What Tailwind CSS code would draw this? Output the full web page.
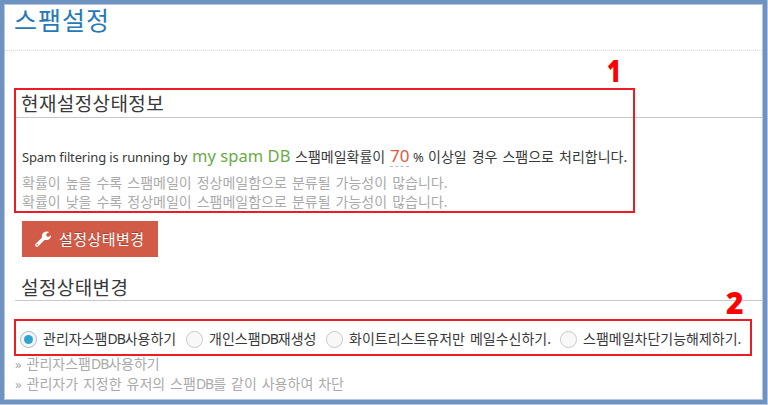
<!DOCTYPE html>
<html lang="ko">
<head>
<meta charset="utf-8">
<title>스팸설정</title>
<script src="https://cdn.jsdelivr.net/npm/@tailwindcss/browser@4"></script>
</head>
<body class="w-[768px] h-[405px] overflow-hidden bg-[#b5c6df] pb-px pr-px font-['Noto_Sans','Noto_Sans_CJK_KR',sans-serif] text-[#393939]">
<div class="relative h-[404px] w-[767px] border-4 border-[#6f93c0] bg-white">
  <div class="h-[396px] w-[759px] border border-[#b5c6df]">
    <header class="h-[46px] border-b border-dotted border-[#d8d8d8] pl-[9px]">
      <h1 class="whitespace-nowrap text-[25px] leading-[31px] tracking-[1px] text-[#2679b5]">스팸설정</h1>
    </header>
    <main class="pl-[10px]">
      <h2 class="mt-[38px] h-[29px] border-b border-[#c8c8c8] pl-[6px] text-[19px] leading-[30px] tracking-[0.4px] whitespace-nowrap">현재설정상태정보</h2>
      <div class="mt-[26px] flex h-[26px] items-baseline pl-[7px] text-[13px] leading-[24px] whitespace-nowrap">
        <span class="w-[170px] tracking-[-0.13px]">Spam filtering is running by</span>
        <span class="w-[103px] text-[16.5px] tracking-[0.05px] text-[#69aa46]">my spam DB</span>
        <span class="w-[95px] text-[14px]">스팸메일확률이</span>
        <span class="mr-[4px] h-[22px] w-[19px] border-b border-dashed border-[#bbb] text-[17px] leading-[22px] text-[#dd5a43]">70</span>
        <span class="w-[15px] text-[13px]">%</span>
        <span class="text-[14px] [word-spacing:1.4px]">이상일 경우 스팸으로 처리합니다.</span>
      </div>
      <div class="mt-[3px] pl-[7px] text-[14px] leading-[19px] text-[#aaa] [word-spacing:1.4px] whitespace-nowrap">
        <p>확률이 높을 수록 스팸메일이 정상메일함으로 분류될 가능성이 많습니다.</p>
        <p>확률이 낮을 수록 정상메일이 스팸메일함으로 분류될 가능성이 많습니다.</p>
      </div>
      <button class="mt-[10px] ml-[7px] flex h-[36px] w-[136px] items-center bg-[#d15b47] pl-[13px] text-[15px] tracking-[0.45px] text-white [text-shadow:0_-1px_0_rgba(0,0,0,0.25)] whitespace-nowrap">
        <svg class="mr-[8px] h-[16px] w-[16px]" viewBox="0 0 16 16" fill="#fff"><path fill-rule="evenodd" d="M.7 12.7 7.1 6.4A4.7 4.7 0 0 1 11.4.4C12.500.3 13.400.6 14.200 1.100L11.400 2.800V4.900L13.200 5.900 15.900 4.300C16.100 6.700 14.100 9.100 11.600 9.100 10.900 9.100 10.300 9 9.700 8.800L3.300 15.300A1.800 1.800 0 0 1 .7 12.700ZM2.200 13.100a.7.7 0 1 0 .1 0Z"/></svg>
        <span>설정상태변경</span>
      </button>
      <h2 class="mt-[16px] h-[28px] border-b border-[#c8c8c8] pl-[6px] text-[19px] leading-[30px] tracking-[0.4px] whitespace-nowrap">설정상태변경</h2>
      <div class="mt-[29px] flex h-[18px] items-center pl-[5px] text-[14px] leading-[18px] whitespace-nowrap">
        <label class="flex w-[166px] items-center gap-[6px]"><i class="flex size-[17px] shrink-0 items-center justify-center rounded-full border border-[#adb8c0] bg-[#f3f7fa]"><b class="size-[9px] rounded-full bg-[#32a3ce]"></b></i><span>관리자스팸<span class="tracking-[-1px]">DB</span>사용하기</span></label>
        <label class="flex w-[140px] items-center gap-[6px]"><i class="size-[17px] shrink-0 rounded-full border border-[#c8c8c8] bg-[#f8f8f8]"></i><span>개인스팸<span class="tracking-[-1px]">DB</span>재생성</span></label>
        <label class="flex w-[234px] items-center gap-[6px]"><i class="size-[17px] shrink-0 rounded-full border border-[#c8c8c8] bg-[#f8f8f8]"></i><span class="[word-spacing:1.4px]">화이트리스트유저만 메일수신하기.</span></label>
        <label class="flex items-center gap-[6px]"><i class="size-[17px] shrink-0 rounded-full border border-[#c8c8c8] bg-[#f8f8f8]"></i><span>스팸메일차단기능해제하기.</span></label>
      </div>
      <ul class="mt-[6px] text-[14px] leading-[20px] text-[#aaa] [word-spacing:1.3px] whitespace-nowrap">
        <li class="flex"><span class="w-[11.5px] text-[13px]">»</span><span>관리자스팸<span class="tracking-[-1px]">DB</span>사용하기</span></li>
        <li class="flex"><span class="w-[11.5px] text-[13px]">»</span><span>관리자가 지정한 유저의 스팸<span class="tracking-[-1px]">DB</span>를 같이 사용하여 차단</span></li>
      </ul>
    </main>
  </div>
  <div class="absolute top-[84px] left-[10px] h-[125px] w-[621px] border-2 border-[#ed1c24]"></div>
  <div class="absolute top-[315px] left-[10px] h-[37px] w-[738px] border-2 border-[#ed1c24]"></div>
  <div class="absolute top-[51px] left-[603px] origin-left scale-x-[0.8] font-['Noto_Sans',sans-serif] text-[30px] leading-[32px] font-black text-[#f00]">1</div>
  <div class="absolute top-[283px] left-[722px] font-['Noto_Sans',sans-serif] text-[30px] leading-[32px] font-black text-[#f00]">2</div>
</div>
</body>
</html>
